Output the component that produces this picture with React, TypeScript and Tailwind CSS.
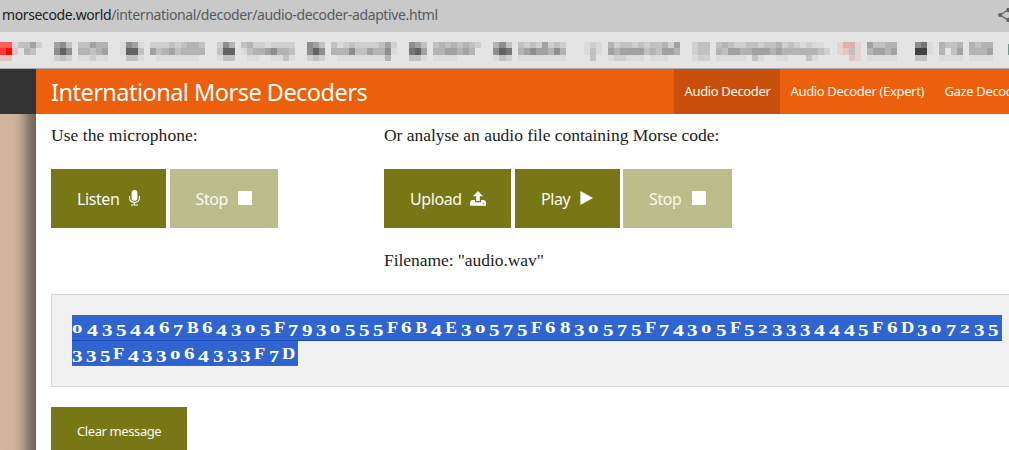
import type { ReactNode } from "react";

const tones: Record<string, string> = {
  a: "#dbdbdb", b: "#cecfce", c: "#c1c1c1", d: "#b2b3b2", e: "#a2a2a2", f: "#8d8e8e",
  g: "#757576", h: "#606264", k: "#414141", r: "#f55f5f", s: "#fd3838", t: "#ff0606",
  u: "#e5c3c3", v: "#dfb0b0", w: "#e4d3d3",
};

type Run = [number, string];

const mosaic: { y: number; h: number; runs: Run[] }[] = [
  {
    y: 9, h: 6,
    runs: [
      [0, "rrwcceb"], [9, "efc"], [13, "ccedd"], [20, "afea"], [25, "bbbcbcddc"], [36, "bfd"], [40, "cd"],
      [42, "bbabbbb"], [51, "fec"], [55, "cabcbbbbceb"], [68, "fec"], [72, "cdcdcdcb"], [82, "dfc"],
      [86, "cbcbebcb"], [97, "aba"], [101, "dbccbcbccdbe"], [115, "bcc"], [119, "cdcbbccb"],
      [127, "ccdbcbabaa"], [139, "wvvw"], [144, "eccdd"], [152, "fg"], [154, "a"], [156, "dccd"], [161, "dcdd"],
    ],
  },
  {
    y: 15, h: 7,
    runs: [
      [0, "stu"], [4, "dc"], [9, "fhf"], [13, "ddcde"], [20, "ahhc"], [25, "ecdecdddd"], [36, "chh"], [40, "ac"],
      [42, "ddefddc"], [51, "fhf"], [55, "dddfcceddfa"], [68, "ghe"], [72, "ddeeded"], [82, "fhg"],
      [86, "defeedfd"], [97, "aca"], [101, "edeeeecdceed"], [115, "bcc"], [119, "dceedde"],
      [126, "eededdddddcb"], [139, "wucw"], [144, "deede"], [152, "kka"], [156, "d"], [158, "ce"], [161, "ddde"],
    ],
  },
  {
    y: 22, h: 6,
    runs: [
      [0, "uu"], [9, "bcb"], [13, "aabaa"], [21, "cca"], [26, "aaaaaaa"], [36, "acc"], [41, "aa"],
      [45, "aaca"], [51, "bcb"], [56, "aaaaaaaad"], [68, "cca"], [72, "aaaa"], [82, "acb"], [86, "aaaaaaaa"],
      [98, "c"], [101, "abbaaa"], [108, "aaa"], [115, "abb"], [119, "aaaaa"], [125, "ca"], [129, "aa"], [134, "ca"],
      [141, "uw"], [144, "aaaaa"], [152, "cc"], [156, "aaaa"], [161, "aaaa"],
    ],
  },
];

function BookmarkMosaic() {
  return (
    <svg width="1009" height="36" className="block" shapeRendering="crispEdges">
      {mosaic.map((row) =>
        row.runs.map(([start, cells]) =>
          cells.split("").map((tone, i) => {
            const x = Math.round((start + i) * 6.018);
            const next = Math.round((start + i + 1) * 6.018);
            return <rect key={`${start}-${i}`} x={x} y={row.y + 1} width={next - x} height={row.h} fill={tones[tone]} />;
          }),
        ),
      )}
      <rect x="1008" y="12" width="1" height="11" fill="#55a58b" />
    </svg>
  );
}

const glyphClass: Record<string, string> = {
  "0": "w-[14.9px] text-[13px] scale-x-[1.6]",
  "2": "w-[13.9px] text-[13px] scale-x-[1.5]",
  "3": "w-[14px] translate-y-[3px] scale-x-[1.2]",
  "4": "w-[14.7px] translate-y-[3px] scale-x-[1.25]",
  "5": "w-[14px] translate-y-[3px] scale-x-[1.2]",
  "6": "w-[14.5px] scale-x-[1.2]",
  "7": "w-[13.5px] translate-y-[3px] scale-x-[1.15]",
  "8": "w-[14.6px] scale-x-[1.2]",
  "9": "w-[14px] translate-y-[3px] scale-x-[1.2]",
  B: "w-[15px]",
  D: "w-[16.2px] scale-x-[1.05]",
  E: "w-[15.4px]",
  F: "w-[14.3px] scale-x-[1.05]",
};

function DecodedLine({ text }: { text: string }) {
  return (
    <div className="flex h-[22px] items-baseline border-b border-dotted border-[#2858c2] text-[17.5px] leading-[24px] font-bold text-white">
      {text.split("").map((c, i) => (
        <span key={i} className={`flex-auto origin-left whitespace-pre ${glyphClass[c]}`}>{c + " "}</span>
      ))}
    </div>
  );
}

function ActionButton({ size, label, disabled, children }: { size: string; label: string; disabled?: boolean; children: ReactNode }) {
  return (
    <button
      className={`flex h-[59px] items-center pt-px font-['Noto_Sans',sans-serif] text-[16px] leading-6 text-white ${disabled ? "bg-[#bbbd8b]" : "bg-[#777716]"} ${size}`}
    >
      <span className={`tracking-[-0.4px] ${disabled ? "text-[#f8f9f1]" : "text-[#fafaf2]"}`}>{label}</span>
      {children}
    </button>
  );
}

function MicIcon() {
  return (
    <svg className="mb-[2px] ml-[9.5px]" width="11" height="16" viewBox="0 0 11 16" fill="none">
      <rect x="2.6" y="0" width="5.8" height="10.8" rx="2.9" fill="#fff" />
      <path d="M.6 6v2.2a4.9 4.3 0 0 0 9.8 0V6M5.5 12.5V15M2 15h7" stroke="#fff" strokeWidth="1.2" />
    </svg>
  );
}

function StopIcon() {
  return (
    <svg className="mb-[2px] ml-[10.5px]" width="14" height="14" viewBox="0 0 14 14">
      <rect width="14" height="14" rx=".6" fill="#fff" />
    </svg>
  );
}

function UploadIcon() {
  return (
    <svg className="mb-[2px] ml-[8.5px]" width="16" height="15" viewBox="0 0 16 15" fill="#fff">
      <path d="M8 0l5 5.2H9.8V10H6.2V5.2H3z" />
      <path fillRule="evenodd" d="M1.6 9H5v2.2h6V9h3.4L16 11v3.2a.5.5 0 0 1-.5.5H.5a.5.5 0 0 1-.5-.5V11zM12.7 12v1.1h1.5V12z" />
    </svg>
  );
}

function PlayIcon() {
  return (
    <svg className="mb-[2px] ml-[10px]" width="14" height="14" viewBox="0 0 14 14">
      <path d="M.4 0L13 7 .4 14z" fill="#fff" />
    </svg>
  );
}

export default function App() {
  return (
    <div className="h-[450px] w-[1009px] overflow-hidden bg-white font-['Noto_Sans',sans-serif]">
      <div className="flex h-8 items-center justify-between bg-[#c9c9c9] pb-[3px] pl-[2px] text-[14px] whitespace-nowrap">
        <span className="tracking-[-0.375px] text-[#58595d]">
          <span className="text-[#202124]">morsecode.world</span>/international/decoder/audio-decoder-adaptive.html
        </span>
        <svg width="11" height="14" viewBox="0 0 11 14" fill="#606060">
          <path d="M10 2L2 7l8 5" fill="none" stroke="#606060" strokeWidth="1.3" />
          <circle cx="2.1" cy="7" r="2" />
          <circle cx="10.5" cy="2" r="2.2" />
          <circle cx="10.5" cy="12" r="2.2" />
        </svg>
      </div>
      <div className="h-[37px] border-b border-[#a9abad] bg-[#e4e4e4]">
        <BookmarkMosaic />
      </div>

      <div className="flex">
        <aside className="w-9 shrink-0">
          <div className="h-[45px] bg-[#333333]" />
          <div className="h-[336px] bg-[linear-gradient(90deg,#d2b5a0_0,#ceb29d_14px,#c3a894_19px,#a29080_25px,#84756a_30px,#70625a_36px)]" />
        </aside>

        <main className="w-[1100px] shrink-0">
          <header className="flex h-[45px] items-center bg-[#ec5f0c] pl-[15px] whitespace-nowrap text-white">
            <h1 className="w-[623px] pt-px text-[23.5px] leading-8 tracking-[-0.52px]">International Morse Decoders</h1>
            <nav className="flex h-full items-center text-[13px] leading-[45px] tracking-[-0.35px] text-[#fff5ee]">
              <a className="h-full w-[106px] bg-[#c9500c] pl-[10.5px]">Audio Decoder</a>
              <a className="h-full w-[154px] pl-[10.5px]">Audio Decoder (Expert)</a>
              <a className="h-full pl-[10.5px]">Gaze Decoder</a>
            </nav>
          </header>

          <div className="pl-[15px] font-['Liberation_Serif',serif] text-[17.5px] leading-6 text-[#222222]">
            <div className="flex h-[180px] pt-[9px]">
              <section className="w-[333px]">
                <p className="tracking-[0.05px]">Use the microphone:</p>
                <div className="mt-[22px] flex gap-1">
                  <ActionButton size="w-[115px] pl-[26px]" label="Listen"><MicIcon /></ActionButton>
                  <ActionButton size="w-[108px] pl-[25.5px]" label="Stop" disabled><StopIcon /></ActionButton>
                </div>
              </section>
              <section>
                <p className="tracking-[-0.03px]">Or analyse an audio file containing Morse code:</p>
                <div className="mt-[22px] flex">
                  <ActionButton size="mr-1 w-[127px] pl-[26px]" label="Upload"><UploadIcon /></ActionButton>
                  <ActionButton size="mr-[3px] w-[105px] pl-[26px]" label="Play"><PlayIcon /></ActionButton>
                  <ActionButton size="w-[109px] pl-[26px]" label="Stop" disabled><StopIcon /></ActionButton>
                </div>
                <p className="mt-[20px] tracking-[-0.06px]">Filename: "audio.wav"</p>
              </section>
            </div>

            <div className="h-[93px] w-[1000px] border border-[#d3d3d3] bg-[#f1f1f1] pt-[20px] pl-[20px]">
              <div className="h-[26px] w-[930px] border-b border-[#1748c2] bg-[#3065d0]">
                <DecodedLine text="04354467B64305F7930555F6B4E30575F6830575F74305F523334445F6D307235" />
              </div>
              <div className="h-[25px] w-[226px] bg-[#3065d0]">
                <DecodedLine text="335F433064333F7D" />
              </div>
            </div>

            <button className="mt-[20px] flex h-[59px] w-[136px] items-start bg-[#777716] pt-[13px] pl-[26px] font-['Noto_Sans',sans-serif] text-[13px] leading-[22px] tracking-[-0.4px] text-[#fafaf0]">
              Clear message
            </button>
          </div>
        </main>
      </div>
    </div>
  );
}
